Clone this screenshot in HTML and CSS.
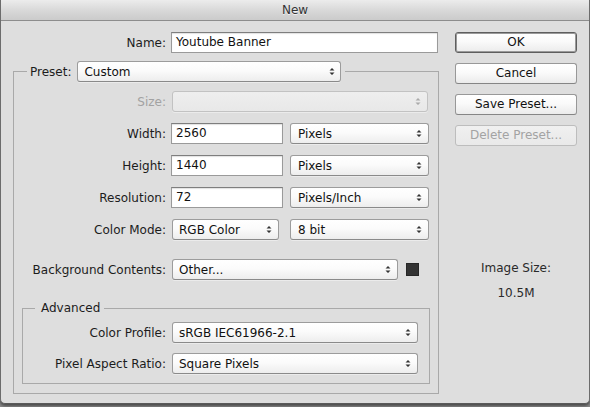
FILE: index.html
```html
<!DOCTYPE html>
<html>
<head>
<meta charset="utf-8">
<title>New</title>
<link rel="stylesheet" href="styles.css">
</head>
<body>
<div class="window">
  <div class="titlebar">New</div>
  <div class="content">
    <div class="left">
      <div class="row name-row">
        <span class="lbl lbl-name">Name:</span>
        <div class="input name-input">Youtube Banner</div>
      </div>
      <fieldset class="group preset">
        <legend class="preset-legend">
          <span class="legend-inner">
            <span class="lbl">Preset:</span>
            <span class="popup preset-popup"><span>Custom</span><svg class="arr" width="6" height="9" viewBox="0 0 6 9"><path d="M0.5 3.5L3 1L5.5 3.5Z M0.5 5.5L3 8L5.5 5.5Z"/></svg></span>
          </span>
        </legend>
        <div class="rows">
          <div class="row">
            <span class="lbl lbl-outer disabled">Size:</span>
            <span class="popup sel popup-disabled w-size"><span></span><svg class="arr" width="6" height="9" viewBox="0 0 6 9"><path d="M0.5 3.5L3 1L5.5 3.5Z M0.5 5.5L3 8L5.5 5.5Z"/></svg></span>
          </div>
          <div class="row">
            <span class="lbl lbl-outer">Width:</span>
            <div class="input w-num">2560</div>
            <span class="popup unit"><span>Pixels</span><svg class="arr" width="6" height="9" viewBox="0 0 6 9"><path d="M0.5 3.5L3 1L5.5 3.5Z M0.5 5.5L3 8L5.5 5.5Z"/></svg></span>
          </div>
          <div class="row">
            <span class="lbl lbl-outer">Height:</span>
            <div class="input w-num">1440</div>
            <span class="popup unit"><span>Pixels</span><svg class="arr" width="6" height="9" viewBox="0 0 6 9"><path d="M0.5 3.5L3 1L5.5 3.5Z M0.5 5.5L3 8L5.5 5.5Z"/></svg></span>
          </div>
          <div class="row">
            <span class="lbl lbl-outer">Resolution:</span>
            <div class="input w-num">72</div>
            <span class="popup unit"><span>Pixels/Inch</span><svg class="arr" width="6" height="9" viewBox="0 0 6 9"><path d="M0.5 3.5L3 1L5.5 3.5Z M0.5 5.5L3 8L5.5 5.5Z"/></svg></span>
          </div>
          <div class="row">
            <span class="lbl lbl-outer">Color Mode:</span>
            <span class="popup sel w-mode"><span>RGB Color</span><svg class="arr" width="6" height="9" viewBox="0 0 6 9"><path d="M0.5 3.5L3 1L5.5 3.5Z M0.5 5.5L3 8L5.5 5.5Z"/></svg></span>
            <span class="popup unit unit-bit"><span>8 bit</span><svg class="arr" width="6" height="9" viewBox="0 0 6 9"><path d="M0.5 3.5L3 1L5.5 3.5Z M0.5 5.5L3 8L5.5 5.5Z"/></svg></span>
          </div>
          <div class="row bg-row">
            <span class="lbl lbl-outer">Background Contents:</span>
            <span class="popup sel w-bg"><span>Other...</span><svg class="arr" width="6" height="9" viewBox="0 0 6 9"><path d="M0.5 3.5L3 1L5.5 3.5Z M0.5 5.5L3 8L5.5 5.5Z"/></svg></span>
            <span class="swatch"></span>
          </div>
          <fieldset class="group advanced">
            <legend class="adv-legend">Advanced</legend>
            <div class="adv-rows">
              <div class="row">
                <span class="lbl lbl-adv">Color Profile:</span>
                <span class="popup sel w-adv"><span>sRGB IEC61966-2.1</span><svg class="arr" width="6" height="9" viewBox="0 0 6 9"><path d="M0.5 3.5L3 1L5.5 3.5Z M0.5 5.5L3 8L5.5 5.5Z"/></svg></span>
              </div>
              <div class="row">
                <span class="lbl lbl-adv">Pixel Aspect Ratio:</span>
                <span class="popup sel w-adv"><span>Square Pixels</span><svg class="arr" width="6" height="9" viewBox="0 0 6 9"><path d="M0.5 3.5L3 1L5.5 3.5Z M0.5 5.5L3 8L5.5 5.5Z"/></svg></span>
              </div>
            </div>
          </fieldset>
        </div>
      </fieldset>
    </div>
    <div class="right">
      <div class="buttons">
        <div class="btn btn-default">OK</div>
        <div class="btn">Cancel</div>
        <div class="btn">Save Preset...</div>
        <div class="btn btn-disabled">Delete Preset...</div>
      </div>
      <div class="imgsize">
        <div class="imgsize-label">Image Size:</div>
        <div class="imgsize-value">10.5M</div>
      </div>
    </div>
  </div>
</div>
</body>
</html>
```

FILE: styles.css
```css
html, body {
  margin: 0;
  padding: 0;
}
body {
  width: 590px;
  height: 407px;
  background: #8a8a8a;
  font-family: "DejaVu Sans", "Lucida Grande", sans-serif;
  font-size: 12px;
  color: #1c1c1c;
  overflow: hidden;
}
.window {
  box-sizing: border-box;
  width: 590px;
  height: 404px;
  background: #dedede;
  border-left: 1px solid #6c6c6c;
  border-right: 1px solid #6c6c6c;
  border-bottom: 1px solid #5a5a5a;
  border-radius: 0 0 5px 5px;
  box-shadow: 0 2px 3px rgba(0,0,0,0.45);
}
.titlebar {
  height: 20px;
  line-height: 21px;
  border-bottom: 1px solid #8d8d8d;
  background: linear-gradient(#ececec, #d9d9d9 50%, #cbcbcb);
  text-align: center;
  color: #333;
  text-shadow: 0 1px 0 rgba(255,255,255,0.7);
}
.content {
  display: flex;
  gap: 16px;
  padding: 11px 12px 0 12px;
}
.left {
  width: 426px;
}
.right {
  width: 122px;
}
.row {
  display: flex;
  align-items: center;
  height: 21px;
}
.lbl {
  white-space: nowrap;
  color: #1c1c1c;
}
.lbl-name {
  width: 153px;
  text-align: right;
  margin-right: 5px;
}
.lbl-outer {
  width: 152px;
  text-align: right;
  margin-right: 5px;
  flex: none;
}
.lbl-adv {
  width: 143px;
  text-align: right;
  margin-right: 5px;
  flex: none;
}
.disabled {
  color: #a2a2a2;
}
.input {
  box-sizing: border-box;
  height: 21px;
  line-height: 19px;
  padding-left: 4px;
  background: #fff;
  border: 1px solid #9a9a9a;
  border-top-color: #7e7e7e;
  box-shadow: inset 0 1px 1px rgba(0,0,0,0.12);
  color: #111;
  flex: none;
}
.name-input {
  width: 267px;
}
.w-num {
  width: 112px;
}
.popup {
  box-sizing: border-box;
  height: 21px;
  display: flex;
  align-items: center;
  justify-content: space-between;
  padding: 0 6px 0 6px;
  background: linear-gradient(#ffffff, #fbfbfb 45%, #ededed);
  border: 1px solid #9c9c9c;
  border-bottom-color: #8a8a8a;
  border-radius: 3px;
  box-shadow: 0 1px 0 rgba(255,255,255,0.4);
  color: #111;
  white-space: nowrap;
  flex: none;
}
.arr {
  fill: #333;
  flex: none;
}
.popup-disabled {
  background: linear-gradient(#eeeeee, #e8e8e8);
  border-color: #c2c2c2;
}
.popup-disabled .arr {
  fill: #aaa;
}
.sel {
  margin-left: 1px;
}
.unit {
  width: 139px;
  margin-left: 7px;
  padding-left: 7px;
}
.unit-bit {
  margin-left: 11px;
}
.w-size {
  width: 256px;
}
.w-mode {
  width: 107px;
}
.w-bg {
  width: 226px;
}
.w-adv {
  width: 246px;
}
.swatch {
  box-sizing: border-box;
  width: 13px;
  height: 13px;
  margin-left: 8px;
  background: #333;
  border: 1px solid #262626;
  flex: none;
}
fieldset.group {
  margin: 0;
  padding: 0;
  min-width: 0;
  border: 1px solid #a9a9a9;
}
fieldset.preset {
  margin-top: 8px;
  padding-bottom: 9px;
}
.preset-legend {
  margin-left: 13px;
  padding: 0 4px 0 3px;
}
.legend-inner {
  display: flex;
  align-items: center;
  height: 21px;
}
.preset-popup {
  width: 264px;
  margin-left: 6px;
  padding-right: 5px;
}
.rows {
  padding-top: 9px;
  display: flex;
  flex-direction: column;
  gap: 11px;
}
.bg-row {
  margin-top: 8px;
}
fieldset.advanced {
  margin: 9px 8px 0 8px;
  padding-bottom: 9px;
}
.adv-legend {
  margin-left: 12px;
  padding: 0 4px 0 6px;
  line-height: 16px;
  color: #1c1c1c;
}
.adv-rows {
  padding-top: 6px;
  display: flex;
  flex-direction: column;
  gap: 10px;
}
.buttons {
  display: flex;
  flex-direction: column;
  gap: 10px;
}
.btn {
  box-sizing: border-box;
  height: 21px;
  line-height: 19px;
  text-align: center;
  background: linear-gradient(#ffffff, #fafafa 45%, #ebebeb);
  border: 1px solid #989898;
  border-bottom-color: #858585;
  border-radius: 3px;
  color: #111;
}
.btn-default {
  border: 1px solid #5e5e5e;
  box-shadow: inset 0 0 0 1px #9a9a9a;
}
.btn-disabled {
  color: #a3a3a3;
  background: linear-gradient(#f0f0f0, #e9e9e9);
  border-color: #bdbdbd;
}
.imgsize {
  margin-top: 114px;
  text-align: center;
  color: #2a2a2a;
  line-height: 16px;
}
.imgsize-value {
  margin-top: 9px;
}
```
